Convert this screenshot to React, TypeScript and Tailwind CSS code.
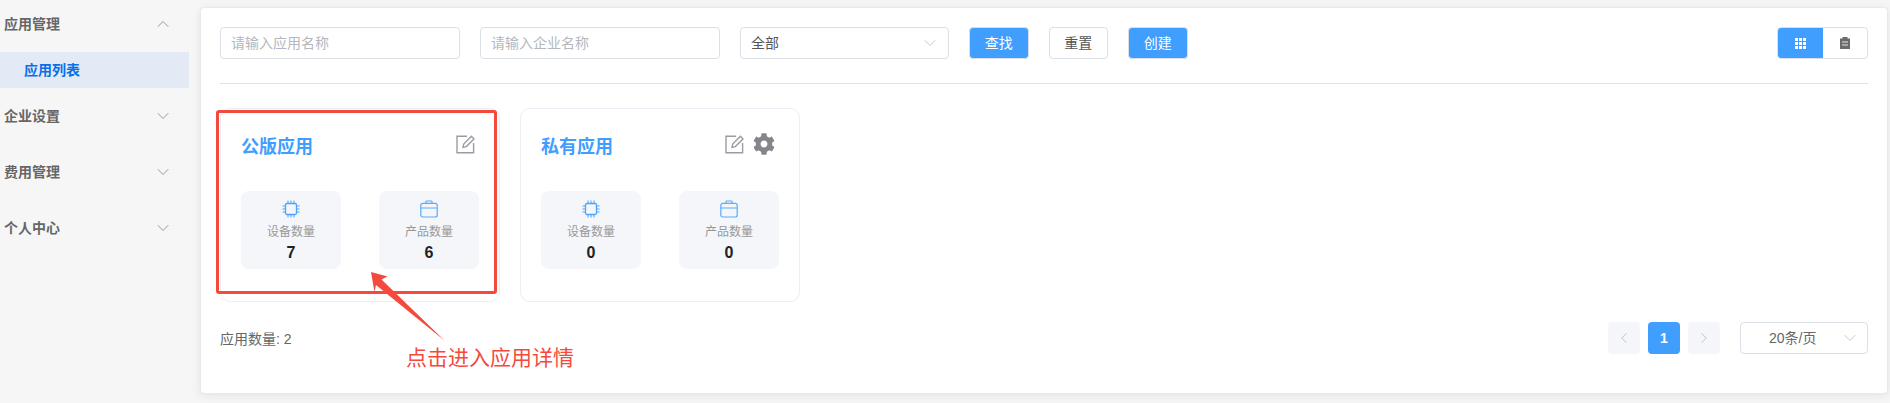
import { ChevronDown, ChevronLeft, ChevronRight, ChevronUp } from "lucide-react";
import { FaCog } from "react-icons/fa";

const fontStack = "font-['Liberation_Sans','Noto_Sans_CJK_SC',sans-serif]";

const EditIcon = () => (
  <svg width="19" height="19" viewBox="0 0 19 19" fill="none" stroke="#9a9ca3" strokeWidth="1.4">
    <path d="M11 1.2H1v16.6h16.6V8" />
    <path d="M7 12.4l.7-3.4L15.4 1.3l2.6 2.6-7.7 7.7z" />
  </svg>
);

const ChipIcon = () => (
  <svg width="18" height="18" viewBox="0 0 18 18" fill="none" stroke="#4aa3ff" strokeWidth="1">
    <rect x="3.5" y="3.5" width="11" height="11" rx="1.5" strokeWidth="1.3" />
    <path d="M6 0.5v2.5M9 0.5v2.5M12 0.5v2.5M6 15v2.5M9 15v2.5M12 15v2.5M0.5 6H3M0.5 9H3M0.5 12H3M15 6h2.5M15 9h2.5M15 12h2.5" />
  </svg>
);

const CaseIcon = () => (
  <svg width="18" height="18" viewBox="0 0 18 18" fill="none" stroke="#5aabff" strokeWidth="1.2">
    <rect x="0.8" y="3.4" width="16.4" height="13.6" rx="2" />
    <path d="M0.8 8h16.4M6 3.4V1.8a.8.8 0 0 1 .8-.8h4.4a.8.8 0 0 1 .8.8v1.6" />
  </svg>
);

const GridIcon = () => (
  <svg width="11" height="11" viewBox="0 0 11 11" fill="#fff">
    <rect x="0" y="0" width="3" height="3" />
    <rect x="4" y="0" width="3" height="3" />
    <rect x="8" y="0" width="3" height="3" />
    <rect x="0" y="4" width="3" height="3" />
    <rect x="4" y="4" width="3" height="3" />
    <rect x="8" y="4" width="3" height="3" />
    <rect x="0" y="8" width="3" height="3" />
    <rect x="4" y="8" width="3" height="3" />
    <rect x="8" y="8" width="3" height="3" />
  </svg>
);

const ClipboardIcon = () => (
  <svg width="10" height="12" viewBox="0 0 10 12">
    <path d="M0 1.5h2.5V0h5v1.5H10V12H0z" fill="#6b6b6b" />
    <path d="M2 5h6M2 8h6" stroke="#e5e5e5" strokeWidth="1" />
  </svg>
);

const menus = [
  { label: "应用管理", open: true },
  { label: "企业设置", open: false },
  { label: "费用管理", open: false },
  { label: "个人中心", open: false },
];

const Sidebar = () => (
  <aside className="w-[189px] shrink-0">
    {menus.map((m) => (
      <div key={m.label}>
        <div className={`flex items-center justify-between pl-1 pr-4 ${m.open ? "h-[48px] mb-1" : "h-[56px]"}`}>
          <span className="text-sm font-bold text-[#666]">{m.label}</span>
          {m.open ? (
            <ChevronUp size={20} strokeWidth={0.9} color="#777" />
          ) : (
            <ChevronDown size={20} strokeWidth={0.9} color="#777" />
          )}
        </div>
        {m.open && (
          <div className="h-9 flex items-center pl-6 bg-[#e3eaf5] text-sm font-bold text-[#0a6fe8]">应用列表</div>
        )}
      </div>
    ))}
  </aside>
);

const Stat = ({ icon, label, value }: { icon: React.ReactNode; label: string; value: number }) => (
  <div className="w-[100px] h-[78px] bg-[#f4f6fa] rounded-lg flex flex-col items-center pt-[9px]">
    {icon}
    <span className="text-xs leading-[16px] mt-[6px] text-[#999]">{label}</span>
    <span className="text-base leading-[18px] mt-[4px] font-bold text-[#222]">{value}</span>
  </div>
);

const AppCard = ({ title, devices, products, gear }: { title: string; devices: number; products: number; gear?: boolean }) => (
  <div className="w-[280px] h-[194px] bg-white border border-[#ebeef5] rounded-[10px] px-[20px] pt-[24px]">
    <div className="flex justify-between h-[58px]">
      <span className="text-lg leading-[28px] font-bold text-[#409eff]">{title}</span>
      <div className="flex gap-[9px] h-[22px] items-center pr-[4px]">
        <EditIcon />
        {gear && <FaCog size={22} color="#85868c" />}
      </div>
    </div>
    <div className="flex justify-between">
      <Stat icon={<ChipIcon />} label="设备数量" value={devices} />
      <Stat icon={<CaseIcon />} label="产品数量" value={products} />
    </div>
  </div>
);

const Input = ({ placeholder }: { placeholder: string }) => (
  <div className="w-[240px] h-8 flex items-center px-[10px] border border-[#dcdfe6] rounded text-sm text-[#b4b7bd]">
    {placeholder}
  </div>
);

const Button = ({ label, primary }: { label: string; primary?: boolean }) => (
  <div
    className={`w-[59.5px] h-8 flex items-center justify-center rounded border border-[#dcdfe6] text-sm ${
      primary ? "bg-[#409eff] text-white" : "bg-white text-[#555]"
    }`}
  >
    {label}
  </div>
);

const Annotation = () => (
  <>
    <div className="absolute left-[216px] top-[110px] w-[281px] h-[184px] border-[3px] border-[#f44a3d] rounded-[3px]" />
    <svg className="absolute left-[360px] top-[265px]" width="95" height="85" viewBox="0 0 95 85" fill="#f44a3d">
      <path d="M11 7l16.5 4.5-6 3L85 76 16 20l-1.5 7z" />
    </svg>
    <span className="absolute left-[406px] top-[344px] text-[21px] leading-[28px] text-[#f44a3d]">点击进入应用详情</span>
  </>
);

const App = () => {
  return (
    <div className={`relative w-[1890px] h-[403px] overflow-hidden flex bg-[#f6f6f6] ${fontStack}`}>
      <Sidebar />
      <main className="ml-[11px] mt-[7px] w-[1688px] h-[387px] bg-white rounded border border-[#e8e8ee] shadow-[0_2px_10px_rgba(0,0,0,0.08)] px-[19px] pt-[19px]">
        <div className="flex items-center gap-5 h-8">
          <Input placeholder="请输入应用名称" />
          <Input placeholder="请输入企业名称" />
          <div className="w-[209px] h-8 flex items-center justify-between pl-[10px] pr-[8px] border border-[#dcdfe6] rounded text-sm text-[#555]">
            全部
            <ChevronDown size={20} strokeWidth={0.9} color="#b4b7bd" />
          </div>
          <Button label="查找" primary />
          <Button label="重置" />
          <Button label="创建" primary />
          <div className="ml-auto w-[91px] h-8 flex border border-[#dcdfe6] rounded overflow-hidden">
            <div className="w-[45px] bg-[#409eff] flex items-center justify-center">
              <GridIcon />
            </div>
            <div className="flex-1 flex items-center justify-center">
              <ClipboardIcon />
            </div>
          </div>
        </div>
        <div className="h-px bg-[#e2e2e6] mt-[24px]" />
        <div className="flex gap-5 mt-[24px]">
          <AppCard title="公版应用" devices={7} products={6} />
          <AppCard title="私有应用" devices={0} products={0} gear />
        </div>
        <div className="flex items-center mt-[20px] h-8">
          <span className="text-sm text-[#666] pt-[2px]">应用数量: 2</span>
          <div className="ml-auto flex gap-2">
            <div className="w-8 h-8 bg-[#f4f6fa] rounded-sm flex items-center justify-center">
              <ChevronLeft size={18} strokeWidth={1.1} color="#b4b7bd" />
            </div>
            <div className="w-8 h-8 bg-[#409eff] rounded-sm flex items-center justify-center text-white text-sm font-bold">1</div>
            <div className="w-8 h-8 bg-[#f4f6fa] rounded-sm flex items-center justify-center">
              <ChevronRight size={18} strokeWidth={1.1} color="#b4b7bd" />
            </div>
          </div>
          <div className="ml-5 w-[128px] h-8 flex items-center justify-between pl-7 pr-[7px] border border-[#dcdfe6] rounded text-sm text-[#666]">
            20条/页
            <ChevronDown size={20} strokeWidth={0.9} color="#b4b7bd" />
          </div>
        </div>
      </main>
      <Annotation />
    </div>
  );
};

export default App;
